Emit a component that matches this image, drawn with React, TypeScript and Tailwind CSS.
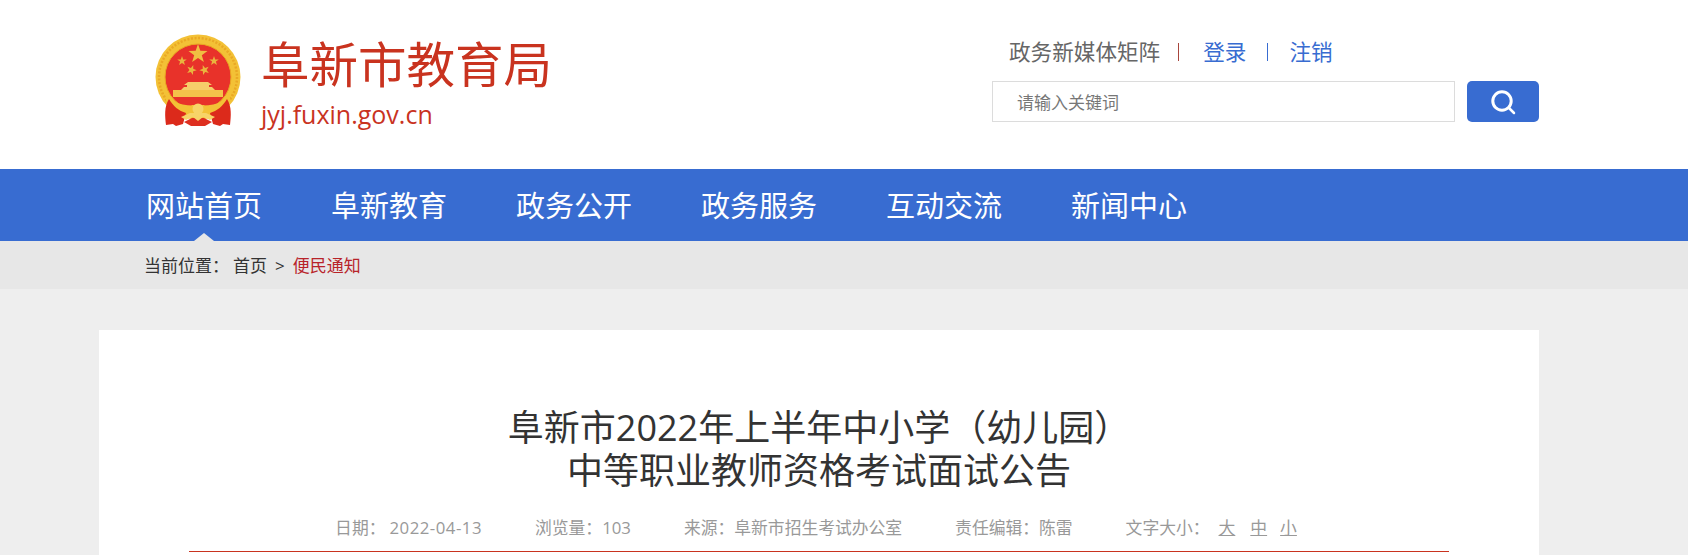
const fontStack = "font-['Open_Sans','Noto_Sans_CJK_SC',sans-serif]";

const navItems = ["网站首页", "阜新教育", "政务公开", "政务服务", "互动交流", "新闻中心"];

function starPoints(cx: number, cy: number, r: number, rot = 0) {
  const pts: string[] = [];
  for (let i = 0; i < 10; i++) {
    const rad = i % 2 === 0 ? r : r * 0.4;
    const a = ((-90 + rot + i * 36) * Math.PI) / 180;
    pts.push(`${(cx + rad * Math.cos(a)).toFixed(2)},${(cy + rad * Math.sin(a)).toFixed(2)}`);
  }
  return pts.join(" ");
}

function Emblem() {
  return (
    <svg viewBox="0 0 86 92" className="w-[86px] h-[92px] shrink-0">
      <circle cx="43" cy="43" r="42.5" fill="#f3c136" />
      <circle cx="43" cy="43" r="39" fill="none" stroke="#eaa825" strokeWidth="2.5" strokeDasharray="2 1.6" />
      <circle cx="43" cy="43" r="33" fill="#e8322a" stroke="#e9a723" strokeWidth="1" />
      <polygon points={starPoints(43, 20, 10)} fill="#f0bf42" />
      <polygon points={starPoints(27, 27, 5)} fill="#e9b53e" />
      <polygon points={starPoints(59, 27, 5)} fill="#e9b53e" />
      <polygon points={starPoints(36.5, 36, 5.2, 20)} fill="#e9b53e" />
      <polygon points={starPoints(49.5, 36, 5.2, -20)} fill="#e9b53e" />
      {/* tiananmen */}
      <path d="M33 48 L53 48 L57 51 L54 51 L54 53 L32 53 L32 51 L29 51 Z" fill="#f6cd6a" />
      <path d="M29 53 L57 53 L60 56 L26 56 Z" fill="#f6cd6a" />
      <rect x="18" y="56" width="50" height="7" fill="#f4c24a" />
      <path d="M11 62 C19 75 67 75 75 62 L75 70 C66 84 20 84 11 70 Z" fill="#f3c136" />
      {/* ribbons */}
      <path d="M14 65 C9 73 10 82 11 91 L18 90 L21 92 L28 90 L31 79 C24 77 18 72 14 65 Z" fill="#dc2a1b" />
      <path d="M72 65 C77 73 76 82 75 91 L68 90 L65 92 L58 90 L55 79 C62 77 68 72 72 65 Z" fill="#dc2a1b" />
      <path d="M29 88 L37 84 L49 84 L57 88 L50 92 L36 92 Z" fill="#de2f20" />
      <path d="M31 79 L37 71 L49 71 L55 79 L49 84 L37 84 Z" fill="#f3c136" />
      <circle cx="43" cy="75" r="5.5" fill="#f7d468" />
      <path d="M26 83 L35 79 L51 79 L60 83 L55 86 L48 83 L43 87 L38 83 L31 86 Z" fill="#f7d468" />
    </svg>
  );
}

export default function App() {
  return (
    <div className={`h-[555px] overflow-hidden bg-[#eeeeee] ${fontStack}`}>
      <header className="h-[169px] bg-white">
        <div className="flex justify-between w-[1440px] ml-[99px]">
          <div className="flex pl-[56px] pt-[34px]">
            <Emblem />
            <div className="ml-[20px]">
              <h1 className="text-[48.5px] leading-[56px] text-[#c9331f] mt-[2px]">阜新市教育局</h1>
              <p className="text-[25px] leading-[30px] text-[#c9331f] mt-[7px]">jyj.fuxin.gov.cn</p>
            </div>
          </div>
          <div className="w-[547px] pt-[37px]">
            <div className="flex items-center h-[30px] text-[21.6px] pl-[17px]">
              <span className="text-[#666]">政务新媒体矩阵</span>
              <span className="w-px h-[18px] bg-[#a8453c] ml-[18px] mr-[24px]" />
              <span className="text-[#386cd1]">登录</span>
              <span className="w-px h-[18px] bg-[#386cd1] ml-[21px] mr-[21px]" />
              <span className="text-[#386cd1]">注销</span>
            </div>
            <div className="flex justify-between mt-[14px]">
              <div className="w-[463px] h-[41px] border border-[#dcdcdc] flex items-center pl-[24px] pt-[2px] text-[17px] text-[#777]">
                请输入关键词
              </div>
              <button className="w-[72px] h-[41px] bg-[#386cd1] rounded-[5px] flex items-center justify-center">
                <svg viewBox="0 0 26 26" className="w-[26px] h-[26px]" fill="none" stroke="#fff">
                  <circle cx="12" cy="12" r="9.2" strokeWidth="3" />
                  <path d="M19 19 L24 24" strokeWidth="2.5" strokeLinecap="round" />
                </svg>
              </button>
            </div>
          </div>
        </div>
      </header>

      <nav className="h-[72px] bg-[#386cd1]">
        <ul className="flex gap-[69px] ml-[146px]">
          {navItems.map((item, i) => (
            <li key={item} className="relative h-[72px] leading-[74px] text-[29px] text-white">
              {item}
              {i === 0 && (
                <span className="absolute left-1/2 -translate-x-1/2 bottom-0 w-0 h-0 border-x-[10px] border-x-transparent border-b-[8px] border-b-[#e7e7e7]" />
              )}
            </li>
          ))}
        </ul>
      </nav>

      <div className="h-[48px] bg-[#e7e7e7] flex items-center pl-[144px] pt-[2px] text-[17px] text-[#333]">
        <span>当前位置：</span>
        <span className="ml-[4px]">首页</span>
        <span className="mx-[8px]">&gt;</span>
        <span className="text-[#b8232a]">便民通知</span>
      </div>

      <main className="w-[1440px] ml-[99px] mt-[41px] h-[400px] bg-white pt-[76px]">
        <h2 className="text-center text-[36px] leading-[43px] text-[#333]">
          阜新市2022年上半年中小学（幼儿园）
          <br />
          中等职业教师资格考试面试公告
        </h2>
        <div className="mx-[90px] mt-[24px] h-[36px] pb-[12px] border-b border-[#c9331f] flex justify-center items-center gap-[53px] text-[16.8px] text-[#999] pr-[6px]">
          <span>
            日期：<span className="ml-[4px] tracking-[0.5px]">2022-04-13</span>
          </span>
          <span>浏览量：103</span>
          <span>来源：阜新市招生考试办公室</span>
          <span>责任编辑：陈雷</span>
          <span className="flex">
            文字大小：
            <span className="ml-[9px] underline">大</span>
            <span className="ml-[15px] underline">中</span>
            <span className="ml-[13px] underline">小</span>
          </span>
        </div>
      </main>
    </div>
  );
}
